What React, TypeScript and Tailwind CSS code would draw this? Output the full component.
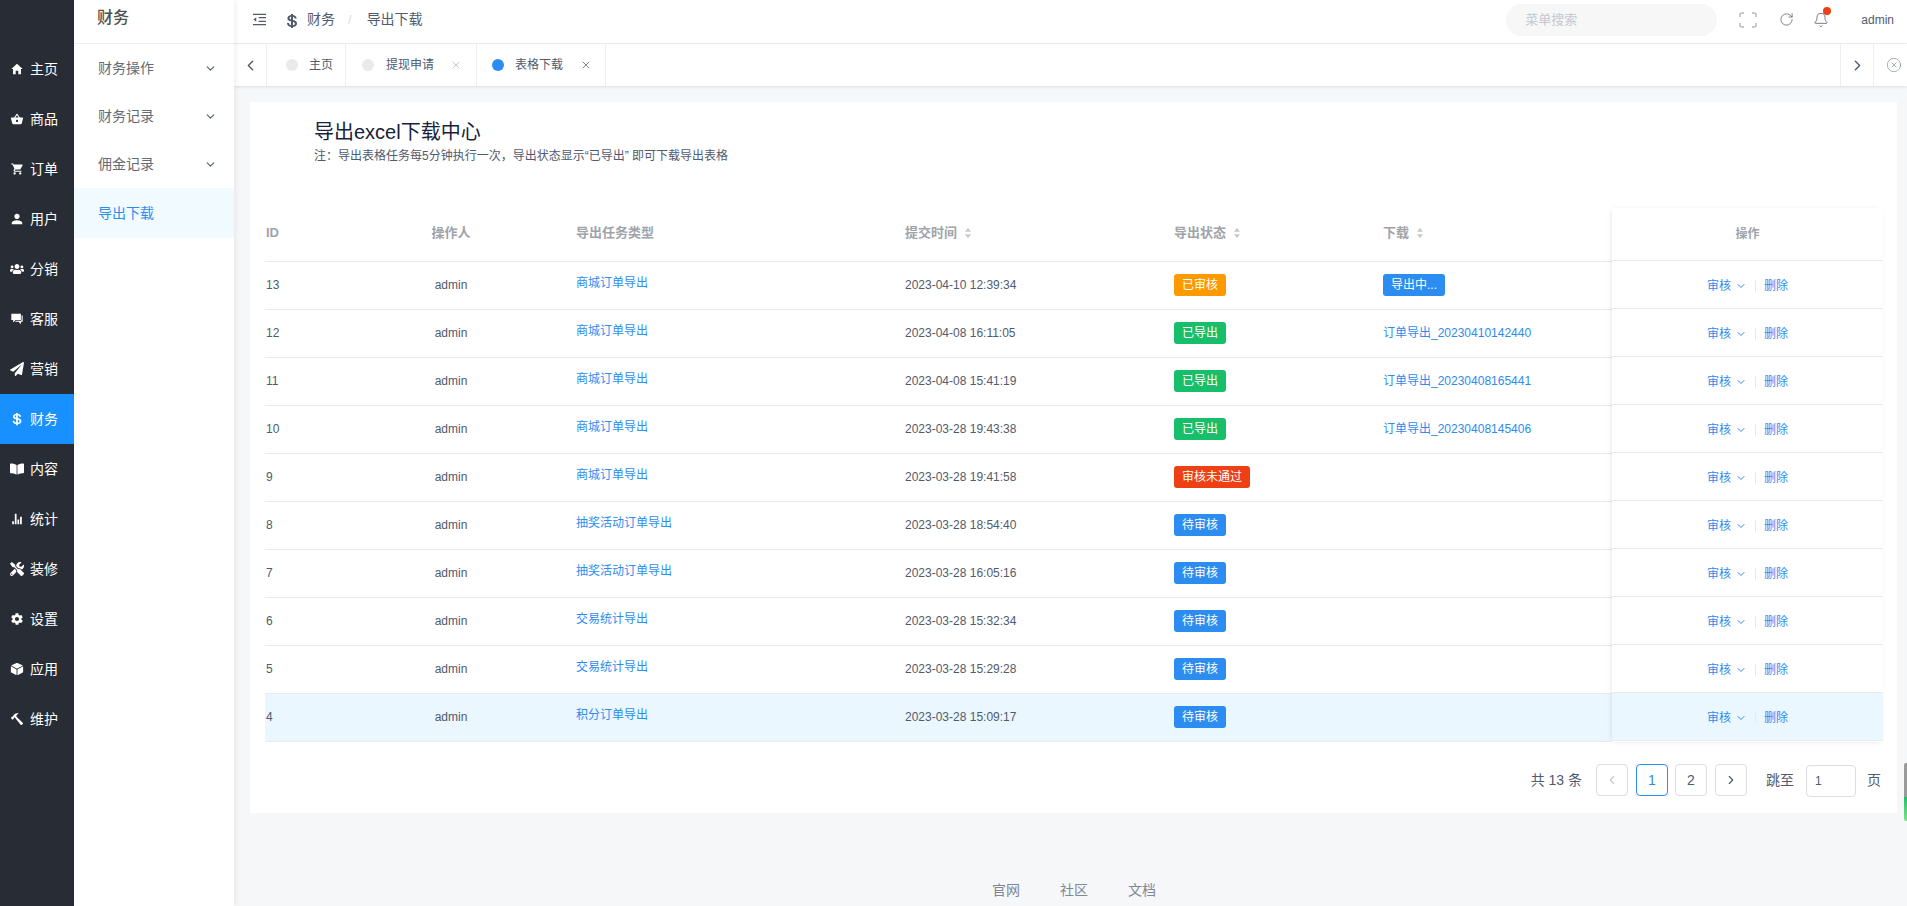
import React from "react";
import {
  IoMdHome, IoMdBasket, IoMdCart, IoMdPerson, IoMdChatboxes,
  IoLogoUsd, IoMdStats, IoMdSettings, IoMdCube, IoMdHammer,
} from "react-icons/io";
import { FaBookOpen, FaPaperPlane, FaTools, FaUsers } from "react-icons/fa";
import { ChevronDown, ChevronLeft, ChevronRight, X, Bell, RotateCw, CircleX } from "lucide-react";

const nav = [
  [IoMdHome, "主页"], [IoMdBasket, "商品"], [IoMdCart, "订单"], [IoMdPerson, "用户"], [FaUsers, "分销"],
  [IoMdChatboxes, "客服"], [FaPaperPlane, "营销"], [IoLogoUsd, "财务"], [FaBookOpen, "内容"], [IoMdStats, "统计"],
  [FaTools, "装修"], [IoMdSettings, "设置"], [IoMdCube, "应用"], [IoMdHammer, "维护"],
] as const;

type Row = { id: number; type: string; time: string; status: string; color: string; dl?: string; badge?: boolean };
const rows: Row[] = [
  { id: 13, type: "商城订单导出", time: "2023-04-10 12:39:34", status: "已审核", color: "bg-[#ff9900]", dl: "导出中...", badge: true },
  { id: 12, type: "商城订单导出", time: "2023-04-08 16:11:05", status: "已导出", color: "bg-[#19be6b]", dl: "订单导出_20230410142440" },
  { id: 11, type: "商城订单导出", time: "2023-04-08 15:41:19", status: "已导出", color: "bg-[#19be6b]", dl: "订单导出_20230408165441" },
  { id: 10, type: "商城订单导出", time: "2023-03-28 19:43:38", status: "已导出", color: "bg-[#19be6b]", dl: "订单导出_20230408145406" },
  { id: 9, type: "商城订单导出", time: "2023-03-28 19:41:58", status: "审核未通过", color: "bg-[#ed4014]" },
  { id: 8, type: "抽奖活动订单导出", time: "2023-03-28 18:54:40", status: "待审核", color: "bg-[#2d8cf0]" },
  { id: 7, type: "抽奖活动订单导出", time: "2023-03-28 16:05:16", status: "待审核", color: "bg-[#2d8cf0]" },
  { id: 6, type: "交易统计导出", time: "2023-03-28 15:32:34", status: "待审核", color: "bg-[#2d8cf0]" },
  { id: 5, type: "交易统计导出", time: "2023-03-28 15:29:28", status: "待审核", color: "bg-[#2d8cf0]" },
  { id: 4, type: "积分订单导出", time: "2023-03-28 15:09:17", status: "待审核", color: "bg-[#2d8cf0]" },
];

const cols = "grid grid-cols-[126px_185px_329px_269px_209px_229px]";

function Sort() {
  return (
    <svg viewBox="0 0 8 14" className="ml-[7px] inline-block w-[8px] h-[12px]">
      <path d="M4 1 L7.5 5.5 H0.5 Z M4 13 L7.5 8.5 H0.5 Z" fill="#c5c8ce" />
    </svg>
  );
}

function Tag({ text, color }: { text: string; color: string }) {
  return <span className={`inline-block h-[22px] leading-[22px] px-[8px] rounded-[3px] text-white text-[12px] ${color}`}>{text}</span>;
}

function PageBtn({ children, active }: { children: React.ReactNode; active?: boolean }) {
  return (
    <div className={`w-[32px] h-[32px] rounded-[4px] border flex items-center justify-center text-[14px] ${active ? "border-[#2d8cf0] text-[#2d8cf0]" : "border-[#dcdee2] text-[#515a6e]"}`}>
      {children}
    </div>
  );
}

export default function App() {
  return (
    <div className="relative flex w-[1907px] h-[906px] overflow-hidden bg-[#f5f7f9] text-[#515a6e] text-[12px] font-[Liberation_Sans,Noto_Sans_CJK_SC,sans-serif]">
      {/* Dark rail */}
      <aside className="w-[74px] shrink-0 bg-[#282c34] pt-[44px] text-white">
        {nav.map(([Icon, label]) => (
          <div key={label} className={`h-[50px] flex items-center pl-[10px] text-[14px] ${label === "财务" ? "bg-[#1890ff]" : ""}`}>
            <span className="w-[14px] flex justify-center"><Icon size={14} /></span>
            <span className="ml-[6px]">{label}</span>
          </div>
        ))}
      </aside>

      {/* Secondary menu */}
      <aside className="relative z-20 w-[160px] shrink-0 bg-white shadow-[2px_0_6px_rgba(0,21,41,0.06)]">
        <div className="h-[44px] border-b border-[#eeeeee] pl-[23px] flex items-center text-[16px] font-medium text-[#515151] pb-[8px]">财务</div>
        {["财务操作", "财务记录", "佣金记录"].map((t) => (
          <div key={t} className="h-[48px] pl-[24px] pr-[17px] flex items-center justify-between text-[14px] text-[#666a73]">
            <span>{t}</span>
            <ChevronDown size={13} strokeWidth={2} className="text-[#515a6e]" />
          </div>
        ))}
        <div className="h-[50px] pl-[24px] flex items-center text-[14px] bg-[#f0faff] text-[#2d8cf0]">导出下载</div>
      </aside>

      {/* Main */}
      <main className="relative flex-1 min-w-0 flex flex-col">
        <header className="h-[44px] shrink-0 bg-white border-b border-[#eeeeee] flex items-center text-[14px] pb-[4px]">
          <svg viewBox="0 0 16 14" className="ml-[18px] w-[15px] h-[13px]" fill="none" stroke="#515a6e" strokeWidth="1.3">
            <path d="M1 1.5H15M7 5H15M7 9H15M1 12.5H15" />
            <path d="M4.5 4.5 L1.5 7 L4.5 9.5Z" fill="#515a6e" stroke="none" />
          </svg>
          <IoLogoUsd size={16} className="ml-[17px] mt-[2px] text-[#515a6e]" />
          <span className="ml-[7px]">财务</span>
          <span className="ml-[13px] text-[#dcdee2] text-[13px]">/</span>
          <span className="ml-[15px]">导出下载</span>
          <div className="ml-auto w-[211px] h-[32px] rounded-full bg-[#f7f7f7] pl-[19px] flex items-center text-[13px] text-[#c5c8ce]">菜单搜索</div>
          <svg viewBox="0 0 18 16" className="ml-[22px] w-[18px] h-[16px]" fill="none" stroke="#8a8f99" strokeWidth="1">
            <path d="M1 5V2.5Q1 1 2.5 1H5M13 1H15.5Q17 1 17 2.5V5M17 11V13.5Q17 15 15.5 15H13M5 15H2.5Q1 15 1 13.5V11" />
          </svg>
          <RotateCw size={15} strokeWidth={1.2} className="ml-[22px] text-[#515a6e]" />
          <div className="relative ml-[19px]">
            <Bell size={16} strokeWidth={1.2} className="text-[#515a6e]" />
            <span className="absolute -top-[5px] left-[10px] w-[8px] h-[8px] rounded-full bg-[#ed4014]" />
          </div>
          <span className="ml-[32px] mr-[13px] text-[12px]">admin</span>
        </header>

        <div className="h-[42px] shrink-0 bg-white flex items-stretch text-[12px] shadow-[0_1px_3px_rgba(0,0,0,0.1)] z-10">
          <div className="w-[33px] border-r border-[#eeeeee] flex items-center justify-center"><ChevronLeft size={17} strokeWidth={2} /></div>
          <div className="w-[79px] border-r border-[#eeeeee] flex items-center pl-[19px]">
            <span className="w-[12px] h-[12px] rounded-full bg-[#e8eaec]" />
            <span className="ml-[11px]">主页</span>
          </div>
          <div className="w-[131px] border-r border-[#eeeeee] flex items-center pl-[16px]">
            <span className="w-[12px] h-[12px] rounded-full bg-[#e8eaec]" />
            <span className="ml-[12px]">提现申请</span>
            <X size={12} className="ml-[16px] text-[#c5c8ce]" />
          </div>
          <div className="w-[129px] border-r border-[#eeeeee] flex items-center pl-[15px]">
            <span className="w-[12px] h-[12px] rounded-full bg-[#2d8cf0]" />
            <span className="ml-[11px]">表格下载</span>
            <X size={12} className="ml-[17px] text-[#808695]" />
          </div>
          <div className="ml-auto w-[33px] border-l border-[#eeeeee] flex items-center justify-center"><ChevronRight size={17} strokeWidth={2} /></div>
          <div className="w-[34px] border-l border-[#eeeeee] flex items-center pl-[12px]"><CircleX size={16} strokeWidth={1} className="text-[#808695]" /></div>
        </div>

        <div className="ml-[16px] mt-[16px] w-[1647px] h-[711px] shrink-0 bg-white px-[15px]">
          <div className="ml-[49px] pt-[18px]">
            <h1 className="text-[20px] leading-[24px] text-[#17233d] font-normal">导出excel下载中心</h1>
            <p className="mt-[2px] leading-[20px] text-[12px] text-[#515a6e]">注：导出表格任务每5分钟执行一次，导出状态显示“已导出” 即可下载导出表格</p>
          </div>

          <div className="mt-[42px] flex">
            <div className="w-[1347px] shrink-0">
              <div className={`${cols} h-[54px] items-center border-b border-[#e8eaec] text-[13px] font-bold text-[#a0a3aa]`}>
                <div className="pl-px pb-[4px]">ID</div>
                <div className="pr-[65px] pb-[4px] text-center">操作人</div>
                <div className="pb-[4px]">导出任务类型</div>
                <div className="pb-[4px]">提交时间<Sort /></div>
                <div className="pb-[4px]">导出状态<Sort /></div>
                <div className="pb-[4px]">下载<Sort /></div>
              </div>
              {rows.map((r) => (
                <div key={r.id} className={`${cols} h-[48px] items-center border-b border-[#e8eaec] pb-[2px] ${r.id === 4 ? "bg-[#ebf7ff]" : ""}`}>
                  <div className="pl-px">{r.id}</div>
                  <div className="pr-[65px] text-center">admin</div>
                  <div className="text-[#2d8cf0] -mt-[4px]">{r.type}</div>
                  <div>{r.time}</div>
                  <div><Tag text={r.status} color={r.color} /></div>
                  <div>
                    {r.badge ? <Tag text={r.dl!} color="bg-[#2d8cf0]" /> : <span className="text-[#2d8cf0]">{r.dl}</span>}
                  </div>
                </div>
              ))}
            </div>
            <div className="w-[271px] shrink-0 shadow-[-2px_0_6px_-2px_rgba(0,0,0,0.1),0_2px_6px_-2px_rgba(0,0,0,0.06)]">
              <div className="h-[53px] flex items-center justify-center border-b border-[#e8eaec] font-bold text-[#a0a3aa]">操作</div>
              {rows.map((r) => (
                <div key={r.id} className={`h-[48px] flex items-center justify-center border-b border-[#e8eaec] pt-[2px] text-[#2d8cf0] ${r.id === 4 ? "bg-[#ebf7ff]" : ""}`}>
                  <span>审核</span>
                  <ChevronDown size={12} strokeWidth={2} className="ml-[4px]" />
                  <span className="mx-[8px] w-px h-[12px] bg-[#e8eaec]" />
                  <span>删除</span>
                </div>
              ))}
            </div>
          </div>

          <div className="mt-[22px] flex items-center justify-end text-[14px] h-[32px] pr-[1px]">
            <span>共 13 条</span>
            <div className="ml-[14px]"><PageBtn><ChevronLeft size={14} className="text-[#c5c8ce]" /></PageBtn></div>
            <div className="ml-[8px]"><PageBtn active>1</PageBtn></div>
            <div className="ml-[7px]"><PageBtn>2</PageBtn></div>
            <div className="ml-[8px]"><PageBtn><ChevronRight size={14} /></PageBtn></div>
            <span className="ml-[19px]">跳至</span>
            <div className="ml-[12px] w-[50px] h-[32px] mt-[2px] rounded-[4px] border border-[#dcdee2] flex items-center pl-[8px] text-[12px]">1</div>
            <span className="ml-[11px]">页</span>
          </div>
        </div>

        <footer className="absolute top-[880px] left-[758px] flex gap-[40px] text-[14px] leading-[20px] text-[#808695]">
          <span>官网</span><span>社区</span><span>文档</span>
        </footer>
      </main>

      <div className="absolute right-0 top-[763px] w-[3px] h-[58px] rounded-l-[2px] overflow-hidden flex flex-col">
        <div className="h-[34px] bg-[#9a9a9a]" />
        <div className="h-[24px] bg-gradient-to-b from-[#19be6b] to-[#7be08f]" />
      </div>
    </div>
  );
}
